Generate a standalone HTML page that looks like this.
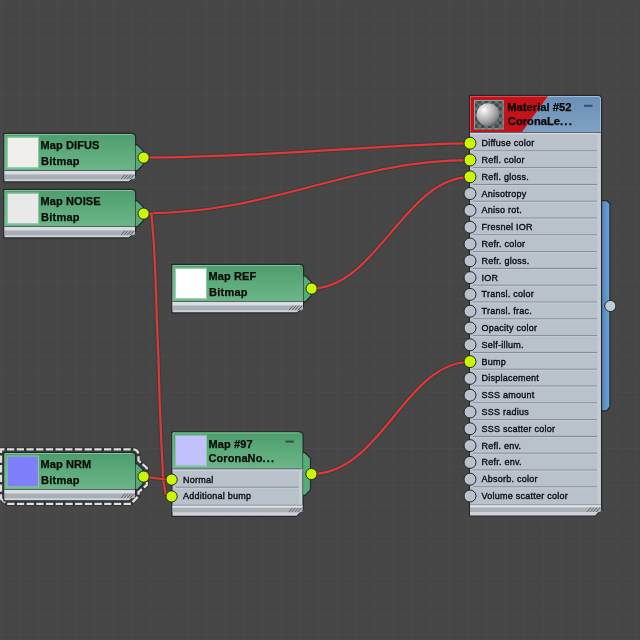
<!DOCTYPE html>
<html><head><meta charset="utf-8"><style>
html,body{margin:0;padding:0;background:#464646;width:640px;height:640px;overflow:hidden}
svg{display:block;filter:blur(0.55px)}
.hb{font-family:"Liberation Sans",sans-serif;font-weight:bold;font-size:11px;fill:#050a07;stroke:#050a07;stroke-width:0.25px;letter-spacing:0.1px}
.hm{font-family:"Liberation Sans",sans-serif;font-weight:bold;font-size:11.2px;fill:#050505;stroke:#050505;stroke-width:0.25px;letter-spacing:0px}
.rw{font-family:"Liberation Sans",sans-serif;font-size:9px;letter-spacing:0.25px;fill:#0a0c10;stroke:#0a0c10;stroke-width:0.35px}
</style></head><body>
<svg width="640" height="640" viewBox="0 0 640 640">
<rect width="640" height="640" fill="#464646"/>
<g><rect x="0.75" y="0" width="1" height="640" fill="#4b4b4b"/><rect x="19.43" y="0" width="1" height="640" fill="#4b4b4b"/><rect x="38.11" y="0" width="1" height="640" fill="#4b4b4b"/><rect x="56.79" y="0" width="1" height="640" fill="#4b4b4b"/><rect x="75.47" y="0" width="1" height="640" fill="#4b4b4b"/><rect x="94.15" y="0" width="1" height="640" fill="#4b4b4b"/><rect x="112.83" y="0" width="1" height="640" fill="#4b4b4b"/><rect x="131.51" y="0" width="1" height="640" fill="#4b4b4b"/><rect x="150.19" y="0" width="1" height="640" fill="#4b4b4b"/><rect x="168.87" y="0" width="1" height="640" fill="#4b4b4b"/><rect x="187.55" y="0" width="1" height="640" fill="#4b4b4b"/><rect x="206.23" y="0" width="1" height="640" fill="#4b4b4b"/><rect x="224.91" y="0" width="1" height="640" fill="#4b4b4b"/><rect x="243.59" y="0" width="1" height="640" fill="#4b4b4b"/><rect x="262.27" y="0" width="1" height="640" fill="#4b4b4b"/><rect x="280.95" y="0" width="1" height="640" fill="#4b4b4b"/><rect x="299.63" y="0" width="1" height="640" fill="#4b4b4b"/><rect x="318.31" y="0" width="1" height="640" fill="#4b4b4b"/><rect x="336.99" y="0" width="1" height="640" fill="#4b4b4b"/><rect x="355.67" y="0" width="1" height="640" fill="#4b4b4b"/><rect x="374.35" y="0" width="1" height="640" fill="#4b4b4b"/><rect x="393.03" y="0" width="1" height="640" fill="#4b4b4b"/><rect x="411.71" y="0" width="1" height="640" fill="#4b4b4b"/><rect x="430.39" y="0" width="1" height="640" fill="#4b4b4b"/><rect x="449.07" y="0" width="1" height="640" fill="#4b4b4b"/><rect x="467.75" y="0" width="1" height="640" fill="#4b4b4b"/><rect x="486.43" y="0" width="1" height="640" fill="#4b4b4b"/><rect x="505.11" y="0" width="1" height="640" fill="#4b4b4b"/><rect x="523.79" y="0" width="1" height="640" fill="#4b4b4b"/><rect x="542.47" y="0" width="1" height="640" fill="#4b4b4b"/><rect x="561.15" y="0" width="1" height="640" fill="#4b4b4b"/><rect x="579.83" y="0" width="1" height="640" fill="#4b4b4b"/><rect x="598.51" y="0" width="1" height="640" fill="#4b4b4b"/><rect x="617.19" y="0" width="1" height="640" fill="#4b4b4b"/><rect x="635.87" y="0" width="1" height="640" fill="#4b4b4b"/><rect x="654.55" y="0" width="1" height="640" fill="#4b4b4b"/><rect x="0" y="1.50" width="640" height="1" fill="#4b4b4b"/><rect x="0" y="20.10" width="640" height="1" fill="#4b4b4b"/><rect x="0" y="38.70" width="640" height="1" fill="#4b4b4b"/><rect x="0" y="57.30" width="640" height="1" fill="#4b4b4b"/><rect x="0" y="75.90" width="640" height="1" fill="#4b4b4b"/><rect x="0" y="94.50" width="640" height="1" fill="#4b4b4b"/><rect x="0" y="113.10" width="640" height="1" fill="#4b4b4b"/><rect x="0" y="131.70" width="640" height="1" fill="#4b4b4b"/><rect x="0" y="150.30" width="640" height="1" fill="#4b4b4b"/><rect x="0" y="168.90" width="640" height="1" fill="#4b4b4b"/><rect x="0" y="187.50" width="640" height="1" fill="#4b4b4b"/><rect x="0" y="206.10" width="640" height="1" fill="#4b4b4b"/><rect x="0" y="224.70" width="640" height="1" fill="#4b4b4b"/><rect x="0" y="243.30" width="640" height="1" fill="#4b4b4b"/><rect x="0" y="261.90" width="640" height="1" fill="#4b4b4b"/><rect x="0" y="280.50" width="640" height="1" fill="#4b4b4b"/><rect x="0" y="299.10" width="640" height="1" fill="#4b4b4b"/><rect x="0" y="317.70" width="640" height="1" fill="#4b4b4b"/><rect x="0" y="336.30" width="640" height="1" fill="#4b4b4b"/><rect x="0" y="354.90" width="640" height="1" fill="#4b4b4b"/><rect x="0" y="373.50" width="640" height="1" fill="#4b4b4b"/><rect x="0" y="392.10" width="640" height="1" fill="#4b4b4b"/><rect x="0" y="410.70" width="640" height="1" fill="#4b4b4b"/><rect x="0" y="429.30" width="640" height="1" fill="#4b4b4b"/><rect x="0" y="447.90" width="640" height="1" fill="#4b4b4b"/><rect x="0" y="466.50" width="640" height="1" fill="#4b4b4b"/><rect x="0" y="485.10" width="640" height="1" fill="#4b4b4b"/><rect x="0" y="503.70" width="640" height="1" fill="#4b4b4b"/><rect x="0" y="522.30" width="640" height="1" fill="#4b4b4b"/><rect x="0" y="540.90" width="640" height="1" fill="#4b4b4b"/><rect x="0" y="559.50" width="640" height="1" fill="#4b4b4b"/><rect x="0" y="578.10" width="640" height="1" fill="#4b4b4b"/><rect x="0" y="596.70" width="640" height="1" fill="#4b4b4b"/><rect x="0" y="615.30" width="640" height="1" fill="#4b4b4b"/><rect x="0" y="633.90" width="640" height="1" fill="#4b4b4b"/><rect x="0" y="652.50" width="640" height="1" fill="#4b4b4b"/></g>
<defs>
<linearGradient id="ggreen" x1="0" y1="0" x2="0" y2="1">
<stop offset="0" stop-color="#4e9d6d"/><stop offset="1" stop-color="#6bb688"/></linearGradient>
<linearGradient id="gbar" x1="0" y1="0" x2="0" y2="1">
<stop offset="0" stop-color="#d6dae0"/><stop offset="0.36" stop-color="#d6dae0"/>
<stop offset="0.40" stop-color="#a9aeb5"/><stop offset="0.76" stop-color="#a9aeb5"/>
<stop offset="0.80" stop-color="#cdd1d7"/><stop offset="1" stop-color="#cdd1d7"/></linearGradient>
<linearGradient id="gblue" x1="0" y1="0" x2="0" y2="1">
<stop offset="0" stop-color="#6a8fb6"/><stop offset="1" stop-color="#7fa1c3"/></linearGradient>
<linearGradient id="gside" x1="0" y1="0" x2="1" y2="0">
<stop offset="0" stop-color="#4d86bd"/><stop offset="1" stop-color="#6aa0d2"/></linearGradient>
<radialGradient id="gsph" cx="0.33" cy="0.3" r="0.8">
<stop offset="0" stop-color="#ffffff"/><stop offset="0.15" stop-color="#e6e6e6"/><stop offset="0.5" stop-color="#b8b8b8"/><stop offset="0.8" stop-color="#8a8c90"/><stop offset="1" stop-color="#4a525a"/></radialGradient>
<pattern id="chk" x="474" y="100" width="7" height="7" patternUnits="userSpaceOnUse">
<rect width="7" height="7" fill="#3e4c4e"/><rect width="3.5" height="3.5" fill="#62726f"/><rect x="3.5" y="3.5" width="3.5" height="3.5" fill="#62726f"/></pattern>
</defs>
<path d="M143.6,157.6 C268.6,157.6 395,143.4 470,143.4" fill="none" stroke="#1c3030" stroke-width="4.2" opacity="0.35"/>
<path d="M143.6,157.6 C268.6,157.6 395,143.4 470,143.4" fill="none" stroke="#e43636" stroke-width="2.2"/>
<path d="M143.75,213.4 C273.75,213.4 350,160.2 470,160.2" fill="none" stroke="#1c3030" stroke-width="4.2" opacity="0.35"/>
<path d="M143.75,213.4 C273.75,213.4 350,160.2 470,160.2" fill="none" stroke="#e43636" stroke-width="2.2"/>
<path d="M311.3,288.6 C376.3,288.6 405,177.2 470,177.2" fill="none" stroke="#1c3030" stroke-width="4.2" opacity="0.35"/>
<path d="M311.3,288.6 C376.3,288.6 405,177.2 470,177.2" fill="none" stroke="#e43636" stroke-width="2.2"/>
<path d="M311.45,474 C381.45,474 405,362 470,362" fill="none" stroke="#1c3030" stroke-width="4.2" opacity="0.35"/>
<path d="M311.45,474 C381.45,474 405,362 470,362" fill="none" stroke="#e43636" stroke-width="2.2"/>
<path d="M143.75,213.6 L151.5,214 L154,245 L155.6,280 L156.9,320 L158.5,360 L159.6,400 L161.25,440 L163.2,480 L165.5,494 L171.5,496" fill="none" stroke="#1c3030" stroke-width="4.2" opacity="0.35"/>
<path d="M143.75,213.6 L151.5,214 L154,245 L155.6,280 L156.9,320 L158.5,360 L159.6,400 L161.25,440 L163.2,480 L165.5,494 L171.5,496" fill="none" stroke="#e43636" stroke-width="2.2"/>
<path d="M143.7,476.8 C152,477 160,479.5 171.4,479.5" fill="none" stroke="#1c3030" stroke-width="4.2" opacity="0.35"/>
<path d="M143.7,476.8 C152,477 160,479.5 171.4,479.5" fill="none" stroke="#e43636" stroke-width="2.2"/>
<g><path d="M3.3,132.8 H132.0 Q136.2,132.8 136.2,137 V144.3 H137.6 L143.8,150.5 V165 L138.0,171.2 H136.2 V175.2 L129.0,182.39999999999998 H3.3 Z" fill="#24272b"/><path d="M4.5,134 H132.0 Q135.0,134 135.0,137 V170 H4.5 Z" fill="url(#ggreen)"/><path d="M5.0,170 V134.5 H132.0" fill="none" stroke="#7fc79c" stroke-width="1"/><path d="M135.6,145.5 H137.2 L142.6,151.0 V164.5 L137.4,170 H135.6 Z" fill="#56ab78"/><rect x="7.5" y="137.5" width="30.5" height="30" fill="#f1efeb"/><rect x="7.0" y="137" width="31.5" height="31" fill="none" stroke="#86cba2" stroke-width="1"/><text x="40.5" y="149.2" class="hb">Map DIFUS</text><text x="41.0" y="164.6" class="hb" style="letter-spacing:0.25px">Bitmap</text><path d="M4.5,170 H135.0 V175.2 L129.0,181.2 H4.5 Z" fill="#cfd3d9"/><rect x="4.5" y="170" width="130.5" height="1" fill="#56625c"/><rect x="4.5" y="171" width="130.5" height="3.6" fill="#d9dde3"/><path d="M4.5,174.6 H135.0 V178.2 L134.0,179.2 H4.5 Z" fill="#a9aeb5"/><line x1="121.0" y1="179.2" x2="125.0" y2="174.6" stroke="#61666d" stroke-width="1"/><line x1="124.0" y1="179.2" x2="128.0" y2="174.6" stroke="#61666d" stroke-width="1"/><line x1="127.0" y1="179.2" x2="131.0" y2="174.6" stroke="#61666d" stroke-width="1"/><line x1="130.0" y1="179.2" x2="134.0" y2="174.6" stroke="#61666d" stroke-width="1"/><circle cx="143.6" cy="157.6" r="5.6" fill="#c9f800" stroke="#24272b" stroke-width="1"/></g>
<g><path d="M3.3,188.8 H132.0 Q136.2,188.8 136.2,193 V200.3 H137.6 L143.8,206.5 V221 L138.0,227.2 H136.2 V231.2 L129.0,238.39999999999998 H3.3 Z" fill="#24272b"/><path d="M4.5,190 H132.0 Q135.0,190 135.0,193 V226 H4.5 Z" fill="url(#ggreen)"/><path d="M5.0,226 V190.5 H132.0" fill="none" stroke="#7fc79c" stroke-width="1"/><path d="M135.6,201.5 H137.2 L142.6,207.0 V220.5 L137.4,226 H135.6 Z" fill="#56ab78"/><rect x="7.5" y="193.5" width="30.5" height="30" fill="#e9e9e9"/><rect x="7.0" y="193" width="31.5" height="31" fill="none" stroke="#86cba2" stroke-width="1"/><text x="40.5" y="205.2" class="hb">Map NOISE</text><text x="41.0" y="220.6" class="hb" style="letter-spacing:0.25px">Bitmap</text><path d="M4.5,226 H135.0 V231.2 L129.0,237.2 H4.5 Z" fill="#cfd3d9"/><rect x="4.5" y="226" width="130.5" height="1" fill="#56625c"/><rect x="4.5" y="227" width="130.5" height="3.6" fill="#d9dde3"/><path d="M4.5,230.6 H135.0 V234.2 L134.0,235.2 H4.5 Z" fill="#a9aeb5"/><line x1="121.0" y1="235.2" x2="125.0" y2="230.6" stroke="#61666d" stroke-width="1"/><line x1="124.0" y1="235.2" x2="128.0" y2="230.6" stroke="#61666d" stroke-width="1"/><line x1="127.0" y1="235.2" x2="131.0" y2="230.6" stroke="#61666d" stroke-width="1"/><line x1="130.0" y1="235.2" x2="134.0" y2="230.6" stroke="#61666d" stroke-width="1"/><circle cx="143.6" cy="213.6" r="5.6" fill="#c9f800" stroke="#24272b" stroke-width="1"/></g>
<g><path d="M171.3,263.8 H300.0 Q304.2,263.8 304.2,268 V275.3 H305.6 L311.8,281.5 V296 L306.0,302.2 H304.2 V306.2 L297.0,313.4 H171.3 Z" fill="#24272b"/><path d="M172.5,265 H300.0 Q303.0,265 303.0,268 V301 H172.5 Z" fill="url(#ggreen)"/><path d="M173.0,301 V265.5 H300.0" fill="none" stroke="#7fc79c" stroke-width="1"/><path d="M303.6,276.5 H305.2 L310.6,282.0 V295.5 L305.4,301 H303.6 Z" fill="#56ab78"/><rect x="175.5" y="268.5" width="30.5" height="30" fill="#ffffff"/><rect x="175.0" y="268" width="31.5" height="31" fill="none" stroke="#86cba2" stroke-width="1"/><text x="208.5" y="280.2" class="hb">Map REF</text><text x="209.0" y="295.6" class="hb" style="letter-spacing:0.25px">Bitmap</text><path d="M172.5,301 H303.0 V306.2 L297.0,312.2 H172.5 Z" fill="#cfd3d9"/><rect x="172.5" y="301" width="130.5" height="1" fill="#56625c"/><rect x="172.5" y="302" width="130.5" height="3.6" fill="#d9dde3"/><path d="M172.5,305.6 H303.0 V309.20000000000005 L302.0,310.20000000000005 H172.5 Z" fill="#a9aeb5"/><line x1="289.0" y1="310.20000000000005" x2="293.0" y2="305.6" stroke="#61666d" stroke-width="1"/><line x1="292.0" y1="310.20000000000005" x2="296.0" y2="305.6" stroke="#61666d" stroke-width="1"/><line x1="295.0" y1="310.20000000000005" x2="299.0" y2="305.6" stroke="#61666d" stroke-width="1"/><line x1="298.0" y1="310.20000000000005" x2="302.0" y2="305.6" stroke="#61666d" stroke-width="1"/><circle cx="311.6" cy="288.6" r="5.6" fill="#c9f800" stroke="#24272b" stroke-width="1"/></g>
<path d="M1,498.5 V449.3 H132 Q138.5,449.3 138.5,455.5 V460.5 L146.8,468 V485 L138.5,492 V496 L131,503.8 H6.5 Z" fill="none" stroke="#1e1e22" stroke-width="4" opacity="0.5"/>
<path d="M1,498.5 V449.3 H132 Q138.5,449.3 138.5,455.5 V460.5 L146.8,468 V485 L138.5,492 V496 L131,503.8 H6.5 Z" fill="none" stroke="#dedede" stroke-width="2.3" stroke-dasharray="7.3,2.4" stroke-dashoffset="3"/>
<g><path d="M3.3,451.8 H132.0 Q136.2,451.8 136.2,456 V463.3 H137.6 L143.8,469.5 V484 L138.0,490.2 H136.2 V494.2 L129.0,501.4 H3.3 Z" fill="#24272b"/><path d="M4.5,453 H132.0 Q135.0,453 135.0,456 V489 H4.5 Z" fill="url(#ggreen)"/><path d="M5.0,489 V453.5 H132.0" fill="none" stroke="#7fc79c" stroke-width="1"/><path d="M135.6,464.5 H137.2 L142.6,470.0 V483.5 L137.4,489 H135.6 Z" fill="#56ab78"/><rect x="7.5" y="456.5" width="30.5" height="30" fill="#7f7ffc"/><rect x="7.0" y="456" width="31.5" height="31" fill="none" stroke="#86cba2" stroke-width="1"/><text x="40.5" y="468.2" class="hb">Map NRM</text><text x="41.0" y="483.6" class="hb" style="letter-spacing:0.25px">Bitmap</text><path d="M4.5,489 H135.0 V494.2 L129.0,500.2 H4.5 Z" fill="#cfd3d9"/><rect x="4.5" y="489" width="130.5" height="1" fill="#56625c"/><rect x="4.5" y="490" width="130.5" height="3.6" fill="#d9dde3"/><path d="M4.5,493.6 H135.0 V497.20000000000005 L134.0,498.20000000000005 H4.5 Z" fill="#a9aeb5"/><line x1="121.0" y1="498.20000000000005" x2="125.0" y2="493.6" stroke="#61666d" stroke-width="1"/><line x1="124.0" y1="498.20000000000005" x2="128.0" y2="493.6" stroke="#61666d" stroke-width="1"/><line x1="127.0" y1="498.20000000000005" x2="131.0" y2="493.6" stroke="#61666d" stroke-width="1"/><line x1="130.0" y1="498.20000000000005" x2="134.0" y2="493.6" stroke="#61666d" stroke-width="1"/><circle cx="143.6" cy="476.6" r="5.6" fill="#c9f800" stroke="#24272b" stroke-width="1"/></g>
<g><path d="M171.3,431.2 H299.5 Q303.7,431.2 303.7,435.4 V452.0 H305.1 L311.1,458.2 V489.7 L305.5,495.9 H303.7 V509.8 L296.5,517.0 H171.3 Z" fill="#24272b"/><path d="M172.5,432.4 H299.5 Q302.5,432.4 302.5,435.4 V468.4 H172.5 Z" fill="url(#ggreen)"/><path d="M173.0,468.4 V432.9 H299.5" fill="none" stroke="#7fc79c" stroke-width="1"/><path d="M303.1,453.2 H304.7 L309.9,458.4 V489.5 L304.9,494.7 H303.1 Z" fill="#56ab78"/><rect x="176.0" y="435.7" width="30" height="30" fill="#c1c1fd"/><rect x="175.5" y="435.2" width="31" height="31" fill="none" stroke="#86cba2" stroke-width="1"/><text x="208.5" y="447.7" class="hb">Map #97</text><text x="208.5" y="461.5" class="hb">CoronaNo<tspan style="letter-spacing:1.2px">...</tspan></text><rect x="285.5" y="440.59999999999997" width="8.5" height="2" fill="#3b4a44"/><rect x="172.5" y="468.4" width="130" height="37.10000000000002" fill="#b9c1ca"/><rect x="172.5" y="468.4" width="130" height="1.2" fill="#5d6570"/><rect x="172.5" y="469.59999999999997" width="130" height="1" fill="#dde2e8"/><rect x="299.0" y="469.59999999999997" width="3" height="36.10000000000002" fill="#c5ccd4"/><text x="183.0" y="482.50" class="rw">Normal</text><rect x="175.5" y="486.70" width="123" height="1.1" fill="#858b93"/><rect x="175.5" y="487.80" width="123" height="0.9" fill="#c6cdd5"/><text x="183.0" y="499.30" class="rw">Additional bump</text><path d="M172.5,505.3 H302.5 V509.79999999999995 L296.5,515.8 H172.5 Z" fill="#cfd3d9"/><rect x="172.5" y="504.70" width="130" height="1.1" fill="#8f959c"/><rect x="172.5" y="505.80" width="130" height="2" fill="#dfe3e9"/><path d="M172.5,507.80 H302.5 V511.30 L301.5,512.30 H172.5 Z" fill="#abb0b7"/><line x1="288.5" y1="512.30" x2="292.5" y2="507.80" stroke="#61666d" stroke-width="1"/><line x1="291.5" y1="512.30" x2="295.5" y2="507.80" stroke="#61666d" stroke-width="1"/><line x1="294.5" y1="512.30" x2="298.5" y2="507.80" stroke="#61666d" stroke-width="1"/><line x1="297.5" y1="512.30" x2="301.5" y2="507.80" stroke="#61666d" stroke-width="1"/><circle cx="171.6" cy="479.60" r="5.6" fill="#c9f800" stroke="#24272b" stroke-width="1"/><circle cx="171.6" cy="496.40" r="5.6" fill="#c9f800" stroke="#24272b" stroke-width="1"/><circle cx="311.45" cy="474" r="5.6" fill="#c9f800" stroke="#24272b" stroke-width="1"/></g>
<g><path d="M601,200 H607 L610.5,203.5 V407 L607,411.5 H601 Z" fill="#24272b"/><path d="M601,201.2 H606.5 L609.3,204 V406.5 L606.5,410.2 H601 Z" fill="url(#gside)"/><circle cx="610.3" cy="306" r="5.6" fill="#c3cad4" stroke="#24272b" stroke-width="1"/><path d="M468.8,94.8 H598 Q602.2,94.8 602.2,99 V509.40000000000003 L595,516.6 H468.8 Z" fill="#24272b"/><path d="M470,96 H598 Q601,96 601,99 V132 H470 Z" fill="url(#gblue)"/><path d="M548,96.5 H598 Q600.5,96.5 600.5,99 V132" fill="none" stroke="#9dbcdc" stroke-width="1"/><path d="M470,96 H548 L522,132 H470 Z" fill="#c4121a"/><path d="M470.5,132 V96.5 H548" fill="none" stroke="#e0484c" stroke-width="1"/><rect x="474" y="100" width="29.6" height="29.4" fill="url(#chk)"/><circle cx="488" cy="114.6" r="11.4" fill="url(#gsph)"/><rect x="474.5" y="100.5" width="28.6" height="28.4" fill="none" stroke="#8aa0a2" stroke-width="1"/><text x="507.3" y="111.3" class="hm">Material #52</text><text x="507.8" y="125.4" class="hm">CoronaLe<tspan style="letter-spacing:1.2px">...</tspan></text><rect x="584" y="104.8" width="8.5" height="2" fill="#3b4a5a"/><rect x="470" y="132" width="131" height="373.1" fill="#b9c1ca"/><rect x="470" y="132" width="131" height="1.2" fill="#5d6570"/><rect x="470" y="133.2" width="131" height="1" fill="#dde2e8"/><rect x="597.5" y="133.2" width="3" height="372.1" fill="#c5ccd4"/><text x="481.5" y="146.10" class="rw">Diffuse color</text><rect x="473" y="150.30" width="124" height="1.1" fill="#858b93"/><rect x="473" y="151.40" width="124" height="0.9" fill="#c6cdd5"/><text x="481.5" y="162.90" class="rw">Refl. color</text><rect x="473" y="167.10" width="124" height="1.1" fill="#858b93"/><rect x="473" y="168.20" width="124" height="0.9" fill="#c6cdd5"/><text x="481.5" y="179.70" class="rw">Refl. gloss.</text><rect x="473" y="183.90" width="124" height="1.1" fill="#858b93"/><rect x="473" y="185.00" width="124" height="0.9" fill="#c6cdd5"/><text x="481.5" y="196.50" class="rw">Anisotropy</text><rect x="473" y="200.70" width="124" height="1.1" fill="#858b93"/><rect x="473" y="201.80" width="124" height="0.9" fill="#c6cdd5"/><text x="481.5" y="213.30" class="rw">Aniso rot.</text><rect x="473" y="217.50" width="124" height="1.1" fill="#858b93"/><rect x="473" y="218.60" width="124" height="0.9" fill="#c6cdd5"/><text x="481.5" y="230.10" class="rw">Fresnel IOR</text><rect x="473" y="234.30" width="124" height="1.1" fill="#858b93"/><rect x="473" y="235.40" width="124" height="0.9" fill="#c6cdd5"/><text x="481.5" y="246.90" class="rw">Refr. color</text><rect x="473" y="251.10" width="124" height="1.1" fill="#858b93"/><rect x="473" y="252.20" width="124" height="0.9" fill="#c6cdd5"/><text x="481.5" y="263.70" class="rw">Refr. gloss.</text><rect x="473" y="267.90" width="124" height="1.1" fill="#858b93"/><rect x="473" y="269.00" width="124" height="0.9" fill="#c6cdd5"/><text x="481.5" y="280.50" class="rw">IOR</text><rect x="473" y="284.70" width="124" height="1.1" fill="#858b93"/><rect x="473" y="285.80" width="124" height="0.9" fill="#c6cdd5"/><text x="481.5" y="297.30" class="rw">Transl. color</text><rect x="473" y="301.50" width="124" height="1.1" fill="#858b93"/><rect x="473" y="302.60" width="124" height="0.9" fill="#c6cdd5"/><text x="481.5" y="314.10" class="rw">Transl. frac.</text><rect x="473" y="318.30" width="124" height="1.1" fill="#858b93"/><rect x="473" y="319.40" width="124" height="0.9" fill="#c6cdd5"/><text x="481.5" y="330.90" class="rw">Opacity color</text><rect x="473" y="335.10" width="124" height="1.1" fill="#858b93"/><rect x="473" y="336.20" width="124" height="0.9" fill="#c6cdd5"/><text x="481.5" y="347.70" class="rw">Self-illum.</text><rect x="473" y="351.90" width="124" height="1.1" fill="#858b93"/><rect x="473" y="353.00" width="124" height="0.9" fill="#c6cdd5"/><text x="481.5" y="364.50" class="rw">Bump</text><rect x="473" y="368.70" width="124" height="1.1" fill="#858b93"/><rect x="473" y="369.80" width="124" height="0.9" fill="#c6cdd5"/><text x="481.5" y="381.30" class="rw">Displacement</text><rect x="473" y="385.50" width="124" height="1.1" fill="#858b93"/><rect x="473" y="386.60" width="124" height="0.9" fill="#c6cdd5"/><text x="481.5" y="398.10" class="rw">SSS amount</text><rect x="473" y="402.30" width="124" height="1.1" fill="#858b93"/><rect x="473" y="403.40" width="124" height="0.9" fill="#c6cdd5"/><text x="481.5" y="414.90" class="rw">SSS radius</text><rect x="473" y="419.10" width="124" height="1.1" fill="#858b93"/><rect x="473" y="420.20" width="124" height="0.9" fill="#c6cdd5"/><text x="481.5" y="431.70" class="rw">SSS scatter color</text><rect x="473" y="435.90" width="124" height="1.1" fill="#858b93"/><rect x="473" y="437.00" width="124" height="0.9" fill="#c6cdd5"/><text x="481.5" y="448.50" class="rw">Refl. env.</text><rect x="473" y="452.70" width="124" height="1.1" fill="#858b93"/><rect x="473" y="453.80" width="124" height="0.9" fill="#c6cdd5"/><text x="481.5" y="465.30" class="rw">Refr. env.</text><rect x="473" y="469.50" width="124" height="1.1" fill="#858b93"/><rect x="473" y="470.60" width="124" height="0.9" fill="#c6cdd5"/><text x="481.5" y="482.10" class="rw">Absorb. color</text><rect x="473" y="486.30" width="124" height="1.1" fill="#858b93"/><rect x="473" y="487.40" width="124" height="0.9" fill="#c6cdd5"/><text x="481.5" y="498.90" class="rw">Volume scatter color</text><path d="M470,504.90000000000003 H601 V509.4000000000001 L595,515.4000000000001 H470 Z" fill="#cfd3d9"/><rect x="470" y="504.30" width="131" height="1.1" fill="#8f959c"/><rect x="470" y="505.40" width="131" height="2" fill="#dfe3e9"/><path d="M470,507.40 H601 V510.90 L600,511.90 H470 Z" fill="#abb0b7"/><line x1="587" y1="511.90" x2="591" y2="507.40" stroke="#61666d" stroke-width="1"/><line x1="590" y1="511.90" x2="594" y2="507.40" stroke="#61666d" stroke-width="1"/><line x1="593" y1="511.90" x2="597" y2="507.40" stroke="#61666d" stroke-width="1"/><line x1="596" y1="511.90" x2="600" y2="507.40" stroke="#61666d" stroke-width="1"/><circle cx="470" cy="143.20" r="6" fill="#c9f800" stroke="#24272b" stroke-width="1"/><circle cx="470" cy="160.00" r="6" fill="#c9f800" stroke="#24272b" stroke-width="1"/><circle cx="470" cy="176.80" r="6" fill="#c9f800" stroke="#24272b" stroke-width="1"/><circle cx="470" cy="193.60" r="6" fill="#b9c1cc" stroke="#24272b" stroke-width="1"/><circle cx="470" cy="210.40" r="6" fill="#b9c1cc" stroke="#24272b" stroke-width="1"/><circle cx="470" cy="227.20" r="6" fill="#b9c1cc" stroke="#24272b" stroke-width="1"/><circle cx="470" cy="244.00" r="6" fill="#b9c1cc" stroke="#24272b" stroke-width="1"/><circle cx="470" cy="260.80" r="6" fill="#b9c1cc" stroke="#24272b" stroke-width="1"/><circle cx="470" cy="277.60" r="6" fill="#b9c1cc" stroke="#24272b" stroke-width="1"/><circle cx="470" cy="294.40" r="6" fill="#b9c1cc" stroke="#24272b" stroke-width="1"/><circle cx="470" cy="311.20" r="6" fill="#b9c1cc" stroke="#24272b" stroke-width="1"/><circle cx="470" cy="328.00" r="6" fill="#b9c1cc" stroke="#24272b" stroke-width="1"/><circle cx="470" cy="344.80" r="6" fill="#b9c1cc" stroke="#24272b" stroke-width="1"/><circle cx="470" cy="361.60" r="6" fill="#c9f800" stroke="#24272b" stroke-width="1"/><circle cx="470" cy="378.40" r="6" fill="#b9c1cc" stroke="#24272b" stroke-width="1"/><circle cx="470" cy="395.20" r="6" fill="#b9c1cc" stroke="#24272b" stroke-width="1"/><circle cx="470" cy="412.00" r="6" fill="#b9c1cc" stroke="#24272b" stroke-width="1"/><circle cx="470" cy="428.80" r="6" fill="#b9c1cc" stroke="#24272b" stroke-width="1"/><circle cx="470" cy="445.60" r="6" fill="#b9c1cc" stroke="#24272b" stroke-width="1"/><circle cx="470" cy="462.40" r="6" fill="#b9c1cc" stroke="#24272b" stroke-width="1"/><circle cx="470" cy="479.20" r="6" fill="#b9c1cc" stroke="#24272b" stroke-width="1"/><circle cx="470" cy="496.00" r="6" fill="#b9c1cc" stroke="#24272b" stroke-width="1"/></g>
</svg></body></html>
